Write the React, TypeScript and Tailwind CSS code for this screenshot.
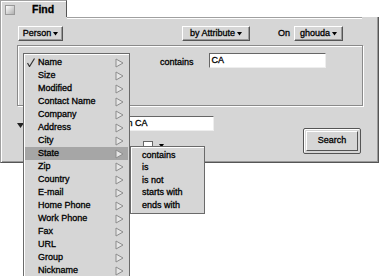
const fields = [
  "Name",
  "Size",
  "Modified",
  "Contact Name",
  "Company",
  "Address",
  "City",
  "State",
  "Zip",
  "Country",
  "E-mail",
  "Home Phone",
  "Work Phone",
  "Fax",
  "URL",
  "Group",
  "Nickname",
];

const ops = ["contains", "is", "is not", "starts with", "ends with"];

function Arrow() {
  return (
    <svg width="9" height="10" viewBox="0 0 9 10">
      <path d="M1 1 L8 5 L1 9 Z" fill="#e6e6e6" stroke="#8c8c8c" strokeWidth="1" />
    </svg>
  );
}

function Caret() {
  return (
    <svg width="5" height="4" viewBox="0 0 5 4" className="ml-[2px]">
      <path d="M0 0 L5 0 L2.5 3.5 Z" fill="#000" />
    </svg>
  );
}

function PullDown({ label, width }: { label: string; width: string }) {
  return (
    <div
      className={`${width} h-[15px] flex items-center justify-center bg-[#d6d6d6] border-t border-l border-white border-r border-b border-r-[#555] border-b-[#555] shadow-[inset_-1px_-1px_0_#9a9a9a]`}
    >
      <span>{label}</span>
      <Caret />
    </div>
  );
}

export default function App() {
  return (
    <div
      className="relative w-[380px] h-[276px] bg-white overflow-hidden text-[9px] text-black [-webkit-text-stroke:0.3px_#000]"
      style={{ fontFamily: '"Liberation Sans", Arial, sans-serif' }}
    >
      {/* Tab */}
      <div className="w-[67px] h-[18px] bg-[#d6d6d6] border-t border-l border-[#a0a0a0] border-r border-r-[#555] flex items-center shadow-[inset_1px_1px_0_#fff]">
        <div className="ml-[4px] w-[10px] h-[10px] border border-[#999] bg-gradient-to-br from-white to-[#b0b0b0]" />
        <span className="ml-[17px] text-[10.5px] font-bold">Find</span>
      </div>

      {/* Panel */}
      <div className="-mt-px w-[379px] h-[146px] bg-[#d6d6d6] border-l border-[#a0a0a0] border-r border-r-[#555] border-b border-b-[#555] shadow-[inset_1px_0_0_#fff,inset_-1px_-1px_0_#9a9a9a] px-[16px] pt-[9px]">
        <div className="flex border-t border-[#a0a0a0] ml-[50px] -mt-[9px] mb-[8px] shadow-[0_1px_0_#fff]" />
        {/* Top row */}
        <div className="flex items-center h-[15px]">
          <div className="ml-px">
            <PullDown label="Person" width="w-[45px]" />
          </div>
          <div className="ml-[119px]">
            <PullDown label="by Attribute" width="w-[68px]" />
          </div>
          <span className="ml-[28px] w-[16px]">On</span>
          <PullDown label="ghouda" width="w-[49px]" />
        </div>

        {/* Criteria box */}
        <div className="mt-[4px] w-[346px] h-[61px] border border-[#8a8a8a] shadow-[1px_1px_0_#fff,inset_1px_1px_0_#fff] flex pt-[7px]">
          <span className="ml-[142px] mt-[3px]">contains</span>
          <div className="ml-[15px] w-[117px] h-[15px] bg-white border-t border-l border-[#666] border-r border-b border-r-[#eee] border-b-[#eee] px-[2px] leading-[13px]">
            CA
          </div>
        </div>

        {/* Bottom area */}
        <div className="flex">
          <div className="flex flex-col">
            <div className="flex items-center mt-[10px]">
              <svg width="7" height="6" viewBox="0 0 7 6" className="mt-[4px]">
                <path d="M0 0 L7 0 L3.5 5 Z" fill="#222" />
              </svg>
              <div className="ml-[6px] w-[184px] h-[15px] bg-white border-t border-l border-[#666] border-r border-b border-r-[#eee] border-b-[#eee] leading-[13px] pl-[62px] whitespace-nowrap overflow-hidden">
                State is in CA
              </div>
            </div>
            <div className="flex items-center mt-[10px] ml-[126px]">
              <div className="w-[10px] h-[10px] bg-white border border-[#666]" />
              <span className="ml-[4px]">
                <Caret />
              </span>
            </div>
          </div>
          <div className="ml-auto mt-[22px] mr-[1px] w-[58px] h-[26px] border border-[#555] rounded-[2px] p-[2px] shadow-[inset_1px_1px_0_#fff]">
            <div className="w-full h-full flex items-center justify-center bg-[#d6d6d6] border-t border-l border-white border-r border-b border-r-[#555] border-b-[#555]">
              Search
            </div>
          </div>
        </div>
      </div>

      {/* Field menu */}
      <div className="absolute left-[23px] top-[53px] w-[107px] bg-[#d6d6d6] border border-[#6a6a6a] shadow-[inset_1px_1px_0_#fff] pt-[2px] px-px">
        {fields.map((f, i) => (
          <div
            key={f}
            className={`h-[13px] flex items-center ${i === 7 ? "bg-[#a6a6a6]" : ""}`}
          >
            <span className="w-[12px] flex justify-center">
              {i === 0 && (
                <svg width="8" height="9" viewBox="0 0 8 9">
                  <path d="M0.5 5 L2.5 8.5 L7.5 0.5" fill="none" stroke="#333" strokeWidth="1.2" />
                </svg>
              )}
            </span>
            <span className="flex-1 ml-px">{f}</span>
            <span className="mr-[4px] flex">
              <Arrow />
            </span>
          </div>
        ))}
      </div>

      {/* Operator submenu */}
      <div className="absolute left-[130px] top-[146px] w-[75px] bg-[#d6d6d6] border border-[#6a6a6a] shadow-[inset_1px_1px_0_#fff] pt-[2px] pb-[1px]">
        {ops.map((o) => (
          <div key={o} className="h-[12.6px] flex items-center pl-[11px]">
            {o}
          </div>
        ))}
      </div>
    </div>
  );
}
